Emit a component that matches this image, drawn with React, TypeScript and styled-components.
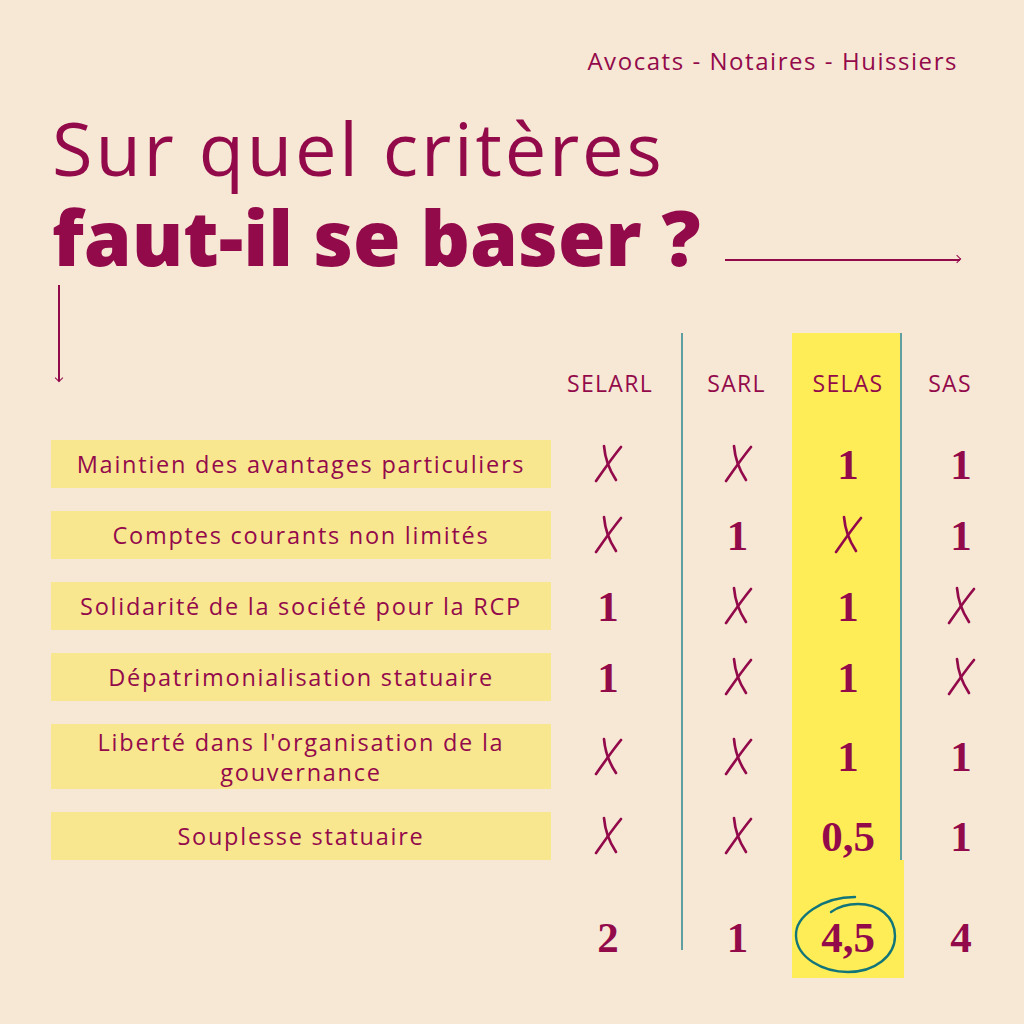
import React from "react";
import styled, { createGlobalStyle } from "styled-components";

const INK = "#930a4b";
const BG = "#f7e7d5";
const LABEL = "#f9e790";
const HILITE = "#ffed57";
const TEAL = "#5f9fa0";

const Global = createGlobalStyle`
  html, body { margin: 0; padding: 0; background: ${BG}; }
  body { font-family: "Open Sans", "DejaVu Sans", sans-serif; color: ${INK}; }
`;

const Page = styled.div`
  width: 1024px;
  height: 1024px;
  box-sizing: border-box;
  padding: 47px 0 0 52px;
  background: ${BG};
  display: flex;
  flex-direction: column;
  overflow: hidden;
`;

const Tag = styled.div`
  align-self: flex-end;
  margin-right: 66px;
  font-size: 24px;
  line-height: 28px;
  font-weight: 500;
  letter-spacing: 1.55px;
`;

const TitleLine = styled.div<{ $bold?: boolean }>`
  display: flex;
  align-items: flex-end;
  gap: 24px;
  font-size: ${(p) => (p.$bold ? 77 : 74)}px;
  line-height: ${(p) => (p.$bold ? 84 : 80)}px;
  font-weight: ${(p) => (p.$bold ? 800 : 500)};
  letter-spacing: ${(p) => (p.$bold ? "0px" : "2.8px")};
  margin-top: ${(p) => (p.$bold ? 7 : 33)}px;
  white-space: nowrap;
`;

const ArrowLine = styled.div`
  flex: 1;
  height: 1.6px;
  background: ${INK};
  margin: 0 64px 18px 0;
  position: relative;
  &::after {
    content: "";
    position: absolute;
    right: 0;
    top: -3.4px;
    width: 6px;
    height: 6px;
    border-top: 1.6px solid ${INK};
    border-right: 1.6px solid ${INK};
    box-sizing: border-box;
    transform: rotate(45deg);
  }
`;

const DownArrow = styled.div`
  width: 1.6px;
  height: 96px;
  background: ${INK};
  margin-left: 7px;
  position: relative;
  &::after {
    content: "";
    position: absolute;
    bottom: 0;
    left: -2.2px;
    width: 6px;
    height: 6px;
    border-bottom: 1.6px solid ${INK};
    border-right: 1.6px solid ${INK};
    box-sizing: border-box;
    transform: rotate(45deg);
  }
`;

const Table = styled.div`
  margin-top: 6px;
  margin-left: -1px;
  display: grid;
  grid-template-columns: 500px 130px 111px 110px 1fr;
  grid-template-rows: 132px 48px 48px 48px 48px 65px 48px 95px;
  row-gap: 23px;
`;

const Highlight = styled.div`
  grid-column: 4;
  grid-row: 1 / -1;
  margin-top: 48px;
  background: ${HILITE};
  border-right: 2px solid ${TEAL};
`;

const HighlightTail = styled.div`
  grid-column: 4;
  grid-row: 8;
  margin-top: -23px;
  margin-right: -2px;
  background: ${HILITE};
`;

const Divider = styled.div`
  grid-column: 3;
  grid-row: 1 / -1;
  margin-top: 48px;
  margin-bottom: 28px;
  border-left: 2px solid ${TEAL};
`;

const ArrowCell = styled.div`
  grid-column: 1;
  grid-row: 1;
`;

const Head = styled.div<{ $col: number; $shift?: number }>`
  grid-column: ${(p) => p.$col};
  grid-row: 1;
  align-self: end;
  margin-bottom: 22px;
  text-align: center;
  transform: translateX(${(p) => p.$shift ?? 0}px);
  font-size: 23px;
  line-height: 24px;
  font-weight: 500;
  letter-spacing: 1.3px;
  position: relative;
  z-index: 1;
`;

const Label = styled.div<{ $row: number }>`
  grid-column: 1;
  grid-row: ${(p) => p.$row};
  background: ${LABEL};
  display: flex;
  align-items: center;
  justify-content: center;
  text-align: center;
  padding: 0 4px;
  font-size: 23.5px;
  line-height: 30px;
  font-weight: 500;
  letter-spacing: 1.75px;
  white-space: nowrap;
`;

const Cell = styled.div<{ $row: number; $col: number; $shift?: number }>`
  grid-column: ${(p) => p.$col};
  grid-row: ${(p) => p.$row};
  display: flex;
  align-items: center;
  justify-content: center;
  transform: translateX(${(p) => p.$shift ?? 0}px);
  position: relative;
  z-index: 1;
`;

const Num = styled.span`
  font-family: "Liberation Serif", "DejaVu Serif", serif;
  font-weight: 700;
  font-size: 43px;
  line-height: 1;
`;

const TotalCell = styled(Cell)`
  align-items: flex-start;
  padding-top: 33px;
`;

const Circle = styled.svg`
  position: absolute;
  left: 0;
  top: 11px;
  pointer-events: none;
`;

const Cross = () => (
  <svg width="30" height="40" viewBox="0 0 30 40" role="img" aria-label="X">
    <path d="M3 37 C 10 27, 19 14, 28 3" fill="none" stroke={INK} strokeWidth="2.7" strokeLinecap="round" />
    <path d="M11 2 C 12 14, 17 27, 23 36" fill="none" stroke={INK} strokeWidth="2.7" strokeLinecap="round" />
  </svg>
);

const rows: { label: React.ReactNode; values: string[] }[] = [
  { label: "Maintien des avantages particuliers", values: ["X", "X", "1", "1"] },
  { label: "Comptes courants non limités", values: ["X", "1", "X", "1"] },
  { label: "Solidarité de la société pour la RCP", values: ["1", "X", "1", "X"] },
  { label: "Dépatrimonialisation statuaire", values: ["1", "X", "1", "X"] },
  { label: <>Liberté dans l'organisation de la<br />gouvernance</>, values: ["X", "X", "1", "1"] },
  { label: "Souplesse statuaire", values: ["X", "X", "0,5", "1"] },
];

const colShift = [-8, 1, 1, -2];
const heads = ["SELARL", "SARL", "SELAS", "SAS"];
const headShift = [-6, 0, 1, -13];
const totals = ["2", "1", "4,5", "4"];

export default function App() {
  return (
    <>
      <Global />
      <Page>
        <Tag>Avocats - Notaires - Huissiers</Tag>
        <TitleLine>Sur quel critères</TitleLine>
        <TitleLine $bold>
          faut-il se baser ?
          <ArrowLine />
        </TitleLine>
        <Table>
          <Highlight />
          <HighlightTail />
          <Divider />
          <ArrowCell>
            <DownArrow />
          </ArrowCell>
          {heads.map((h, i) => (
            <Head key={h} $col={i + 2} $shift={headShift[i]}>
              {h}
            </Head>
          ))}
          {rows.map((r, ri) => (
            <React.Fragment key={ri}>
              <Label $row={ri + 2}>{r.label}</Label>
              {r.values.map((v, ci) => (
                <Cell key={ci} $row={ri + 2} $col={ci + 2} $shift={colShift[ci]}>
                  {v === "X" ? <Cross /> : <Num>{v}</Num>}
                </Cell>
              ))}
            </React.Fragment>
          ))}
          {totals.map((t, ci) => (
            <TotalCell key={ci} $row={8} $col={ci + 2} $shift={colShift[ci]}>
              {ci === 2 && (
                <Circle width="106" height="82" viewBox="0 0 106 82">
                  <path
                    d="M62 3 C 30 3, 2 22, 3 42 C 4 64, 30 78, 55 78 C 82 78, 102 62, 102 42 C 102 22, 85 10, 65 10 C 55 10, 45 13, 38 18"
                    fill="none"
                    stroke="#12757a"
                    strokeWidth="2.4"
                    strokeLinecap="round"
                  />
                </Circle>
              )}
              <Num>{t}</Num>
            </TotalCell>
          ))}
        </Table>
      </Page>
    </>
  );
}
